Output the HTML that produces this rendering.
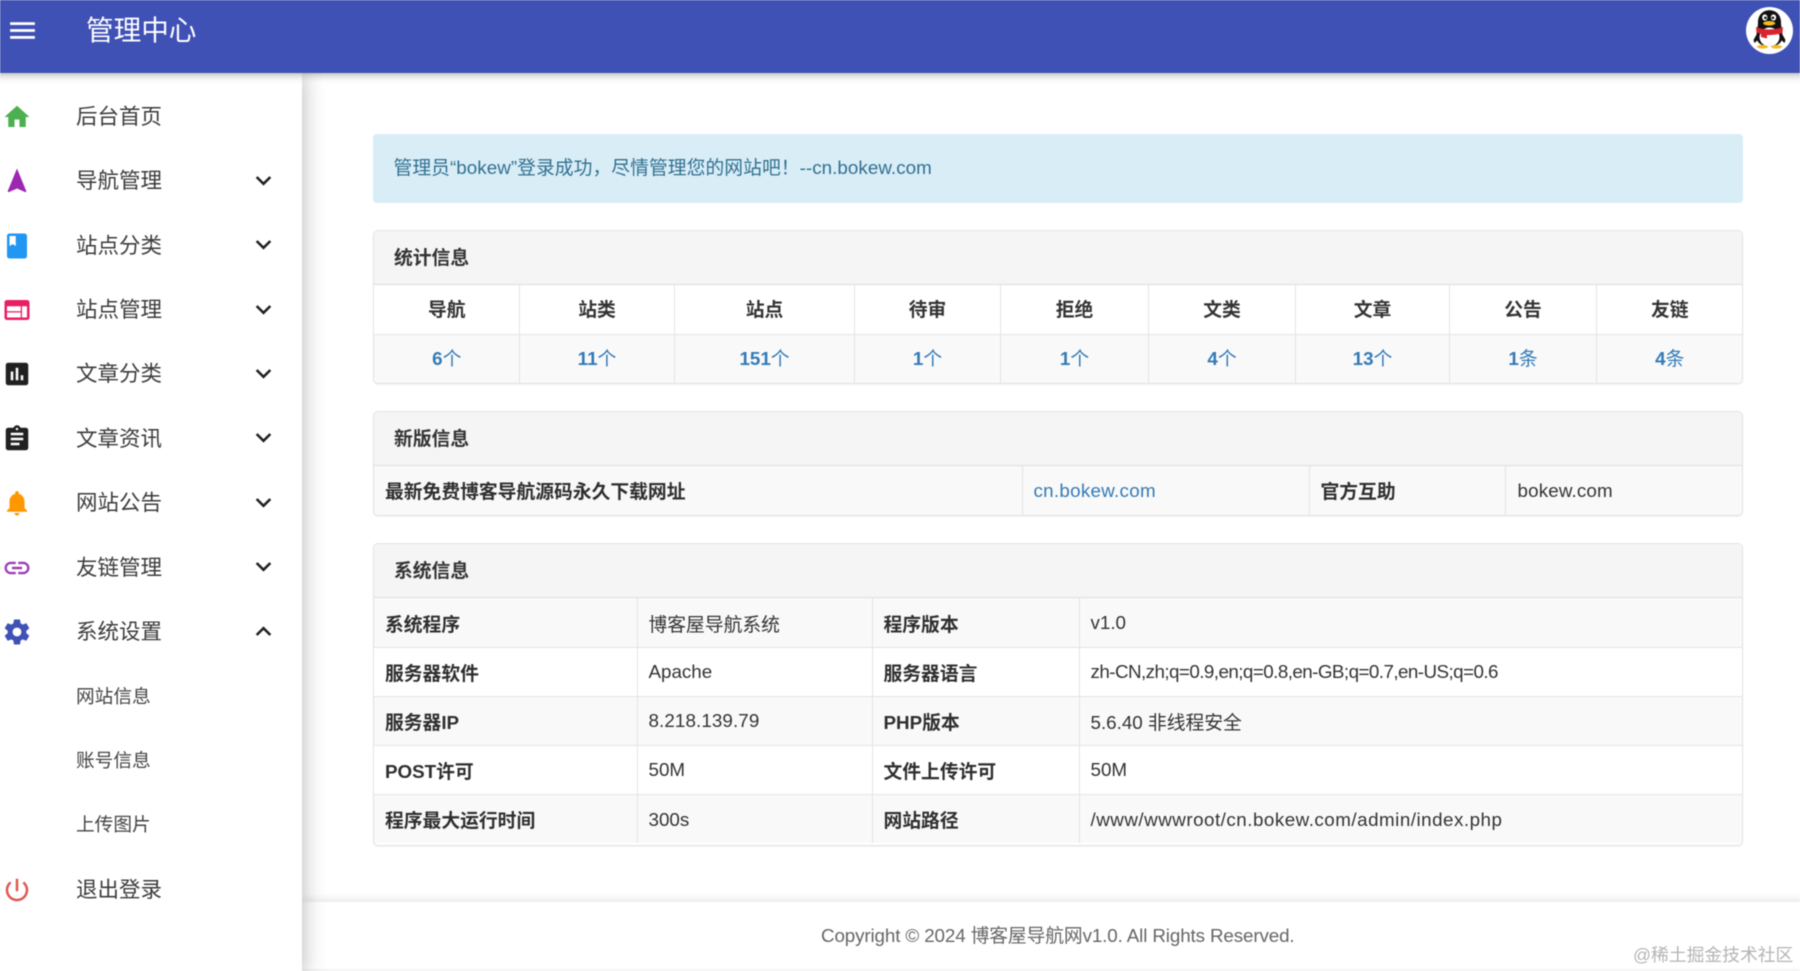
<!DOCTYPE html>
<html lang="zh-CN">
<head>
<meta charset="utf-8">
<title>管理中心</title>
<style>
*{box-sizing:border-box}
html,body{margin:0;padding:0;width:1800px;height:971px;overflow:hidden;background:#fff}
body{font-family:"Liberation Sans","Noto Sans CJK SC",sans-serif;font-size:18.8px;color:#333}
#root{position:relative;width:1800px;height:971px;overflow:hidden;filter:blur(.4px)}
.hdr{position:absolute;left:-6px;top:-6px;width:1812px;height:79px;background:#3f51b5;box-shadow:0 2px 8px rgba(0,0,0,.3);z-index:3}
.hdr svg.m{position:absolute;left:12px;top:20px;width:33px;height:33px;fill:#fff}
.hdr .t{position:absolute;left:92px;top:17px;line-height:40px;font-size:27.6px;color:#fff}
.av{position:absolute;left:1752px;top:13px;width:47px;height:47px}
.side{position:absolute;left:-6px;top:73px;width:308px;height:904px;background:#fff;box-shadow:0 0 22px rgba(0,0,0,.3);z-index:2}
.it{position:absolute;left:6px;width:302px;height:64px;line-height:64px;font-size:21.5px;color:#3c3c3c}
.it span{position:absolute;left:76px;top:0}
.it.sub span{font-size:18.7px;color:#444}
.it svg.i{position:absolute;left:2px;top:17px;width:30px;height:30px}
.it svg.c{position:absolute;left:248px;top:15.5px;width:31px;height:31px;fill:#212121}
.alert{position:absolute;left:373px;top:134px;width:1370px;height:69px;background:#d9edf7;border-radius:4px;color:#31708f;line-height:68px;padding-left:20.5px;font-size:18.8px;letter-spacing:.05px}
.p{position:absolute;left:373px;width:1370px;border:1px solid #e3e3e3;border-radius:5px;overflow:hidden;background:#fff;box-shadow:0 1px 1px rgba(0,0,0,.05)}
.p h3{margin:0;height:54px;line-height:54px;padding-left:20px;font-size:18.8px;font-weight:700;color:#333;background:#f5f5f5;border-bottom:1px solid #ddd}
table{border-collapse:collapse;table-layout:fixed;width:1368px}
td,th{height:49px;padding:0 11px;font-size:18.8px;border:1px solid #e4e4e4;text-align:left;font-weight:400;color:#333;white-space:nowrap}
tr:first-child td,tr:first-child th{border-top:0}
tr:last-child td,tr:last-child th{border-bottom:0}
td:first-child,th:first-child{border-left:0}
td:last-child,th:last-child{border-right:0}
.s th,.s td{text-align:center;padding:0 0 0 1px}
.s td,.s th{padding-bottom:2px}
.t3 td{padding-top:1.5px}
th{font-weight:700}
td.b{font-weight:700;color:#2e2e2e}
a{color:#337ab7;text-decoration:none}
.g{background:#f9f9f9}
.foot{position:absolute;left:302px;top:902px;width:1504px;height:67px;background:#fff;box-shadow:0 -3px 8px rgba(0,0,0,.09);line-height:68px;color:#666;font-size:18.8px}
.foot span{position:absolute;left:519px;top:0;white-space:nowrap;letter-spacing:-.12px}
.wm{position:absolute;left:1633px;top:943px;line-height:24px;font-size:17.8px;color:#b4b4b4;white-space:nowrap;z-index:4}
.btm{position:absolute;left:302px;top:969px;width:1504px;height:8px;background:#f3f3f3}
</style>
</head>
<body>
<div id="root">
<div class="hdr">
  <svg class="m" viewBox="0 0 24 24"><path d="M3 18h18v-2H3v2zm0-5h18v-2H3v2zm0-7v2h18V6H3z"/></svg>
  <div class="t">管理中心</div>
  <svg class="av" viewBox="0 0 47 47">
    <circle cx="23.5" cy="23.5" r="23.5" fill="#fff"/>
    <path d="M12 25 L7.5 33 L8.5 36 L14 31z M35 25 L39.5 33 L38.5 36 L33 31z" fill="#111"/>
    <path d="M23.5 3.3c-7 0-11.5 5-11.5 12 0 5-1.5 8-1.5 14 0 6 4 10 13 10s13-4 13-10c0-6-1.500-9-1.500-14 0-7-4.500-12-11.500-12z" fill="#111"/>
    <ellipse cx="23.500" cy="30" rx="10" ry="9.500" fill="#fff"/>
    <path d="M10 20 Q23.500 25 37 20 L36.500 26 Q29 28.500 21 28 L21 31.500 L15 30 L15 27 L10.500 25.500z" fill="#d9232e"/>
    <ellipse cx="18.800" cy="10.500" rx="2.600" ry="3.100" fill="#fff"/>
    <ellipse cx="27.500" cy="10.500" rx="2.600" ry="3.100" fill="#fff"/>
    <circle cx="19.400" cy="10.800" r="1.300" fill="#111"/>
    <circle cx="26.900" cy="10.800" r="1.300" fill="#111"/>
    <ellipse cx="23.200" cy="16.300" rx="6" ry="2.300" fill="#f5b81f"/>
    <ellipse cx="16.500" cy="39.800" rx="5.500" ry="1.800" fill="#f5b81f"/>
    <ellipse cx="30.500" cy="39.800" rx="5.500" ry="1.800" fill="#f5b81f"/>
  </svg>
</div>

<div class="side">
  <div class="it" style="top:12px"><svg class="i" viewBox="0 0 24 24" fill="#4caf50"><path d="M10 20v-6h4v6h5v-8h3L12 3 2 12h3v8z"/></svg><span>后台首页</span></div>
  <div class="it" style="top:76px"><svg class="i" viewBox="0 0 24 24" fill="#9c27b0"><path d="M12 2L4.5 20.29l.71.71L12 18l6.79 3 .71-.71z"/></svg><span>导航管理</span><svg class="c" viewBox="0 0 24 24"><path d="M16.59 8.59L12 13.17 7.41 8.59 6 10l6 6 6-6z"/></svg></div>
  <div class="it" style="top:140.500px"><svg class="i" viewBox="0 0 24 24" fill="#2196f3"><path d="M18 2H6c-1.100 0-2 .9-2 2v16c0 1.100.9 2 2 2h12c1.100 0 2-.9 2-2V4c0-1.100-.9-2-2-2zM6 4h5v8l-2.500-1.500L6 12V4z"/></svg><span>站点分类</span><svg class="c" viewBox="0 0 24 24"><path d="M16.590 8.590L12 13.170 7.410 8.590 6 10l6 6 6-6z"/></svg></div>
  <div class="it" style="top:205px"><svg class="i" viewBox="0 0 24 24" fill="#e91e63"><path d="M20 4H4c-1.100 0-1.990.9-1.990 2L2 18c0 1.100.9 2 2 2h16c1.100 0 2-.9 2-2V6c0-1.100-.9-2-2-2zm-5 14H4v-4h11v4zm0-5H4V9h11v4zm5 5h-4V9h4v9z"/></svg><span>站点管理</span><svg class="c" viewBox="0 0 24 24"><path d="M16.590 8.590L12 13.170 7.410 8.590 6 10l6 6 6-6z"/></svg></div>
  <div class="it" style="top:269px"><svg class="i" viewBox="0 0 24 24" fill="#212121"><path d="M19 3H5c-1.100 0-2 .9-2 2v14c0 1.100.9 2 2 2h14c1.100 0 2-.9 2-2V5c0-1.100-.9-2-2-2zM9 17H7v-7h2v7zm4 0h-2V7h2v10zm4 0h-2v-4h2v4z"/></svg><span>文章分类</span><svg class="c" viewBox="0 0 24 24"><path d="M16.590 8.590L12 13.170 7.410 8.590 6 10l6 6 6-6z"/></svg></div>
  <div class="it" style="top:333.500px"><svg class="i" viewBox="0 0 24 24" fill="#212121"><path d="M19 3h-4.180C14.400 1.840 13.300 1 12 1c-1.300 0-2.400.84-2.820 2H5c-1.100 0-2 .9-2 2v14c0 1.100.9 2 2 2h14c1.100 0 2-.9 2-2V5c0-1.100-.9-2-2-2zm-7 0c.55 0 1 .45 1 1s-.45 1-1 1-1-.45-1-1 .45-1 1-1zm2 14H7v-2h7v2zm3-4H7v-2h10v2zm0-4H7V7h10v2z"/></svg><span>文章资讯</span><svg class="c" viewBox="0 0 24 24"><path d="M16.590 8.590L12 13.170 7.410 8.590 6 10l6 6 6-6z"/></svg></div>
  <div class="it" style="top:398px"><svg class="i" viewBox="0 0 24 24" fill="#ff9800"><path d="M12 22c1.100 0 2-.9 2-2h-4c0 1.100.89 2 2 2zm6-6v-5c0-3.070-1.640-5.640-4.500-6.320V4c0-.83-.67-1.500-1.500-1.500s-1.500.67-1.500 1.500v.68C7.630 5.360 6 7.920 6 11v5l-2 2v1h16v-1l-2-2z"/></svg><span>网站公告</span><svg class="c" viewBox="0 0 24 24"><path d="M16.590 8.590L12 13.170 7.410 8.590 6 10l6 6 6-6z"/></svg></div>
  <div class="it" style="top:462.500px"><svg class="i" viewBox="0 0 24 24" fill="#9c3fb5"><path d="M3.900 12c0-1.710 1.390-3.100 3.100-3.100h4V7H7c-2.760 0-5 2.240-5 5s2.240 5 5 5h4v-1.900H7c-1.710 0-3.100-1.390-3.100-3.100zM8 13h8v-2H8v2zm9-6h-4v1.900h4c1.710 0 3.100 1.390 3.100 3.100s-1.390 3.100-3.100 3.100h-4V17h4c2.760 0 5-2.240 5-5s-2.240-5-5-5z"/></svg><span>友链管理</span><svg class="c" viewBox="0 0 24 24"><path d="M16.590 8.590L12 13.170 7.410 8.590 6 10l6 6 6-6z"/></svg></div>
  <div class="it" style="top:527px"><svg class="i" viewBox="0 0 24 24" fill="#3f51b5"><path d="M19.430 12.980c.04-.32.07-.64.07-.98s-.03-.66-.07-.98l2.110-1.650c.19-.15.24-.42.12-.64l-2-3.460c-.12-.22-.39-.3-.61-.22l-2.490 1c-.52-.4-1.080-.73-1.690-.98l-.38-2.650C14.460 2.180 14.250 2 14 2h-4c-.25 0-.46.18-.49.42l-.38 2.650c-.61.25-1.170.59-1.690.98l-2.490-1c-.23-.09-.49 0-.61.22l-2 3.460c-.13.22-.07.49.12.64l2.110 1.650c-.04.32-.07.65-.07.98s.03.66.07.98l-2.110 1.650c-.19.15-.24.42-.12.64l2 3.460c.12.22.39.3.61.22l2.490-1c.52.4 1.080.73 1.690.98l.38 2.650c.03.24.24.42.49.42h4c.25 0 .46-.18.49-.42l.38-2.650c.61-.25 1.170-.59 1.690-.98l2.490 1c.23.09.49 0 .61-.22l2-3.460c.12-.22.07-.49-.12-.64l-2.110-1.650zM12 15.500c-1.930 0-3.500-1.570-3.500-3.500s1.570-3.500 3.500-3.500 3.500 1.570 3.500 3.500-1.570 3.500-3.500 3.500z"/></svg><span>系统设置</span><svg class="c" viewBox="0 0 24 24"><path d="M12 8l-6 6 1.410 1.410L12 10.830l4.590 4.580L18 14z"/></svg></div>
  <div class="it sub" style="top:591.500px"><span>网站信息</span></div>
  <div class="it sub" style="top:655.500px"><span>账号信息</span></div>
  <div class="it sub" style="top:720px"><span>上传图片</span></div>
  <div class="it" style="top:784.500px"><svg class="i" viewBox="0 0 24 24" fill="#e0584f"><path d="M13 3h-2v10h2V3zm4.830 2.170l-1.420 1.420C17.990 7.860 19 9.810 19 12c0 3.870-3.130 7-7 7s-7-3.130-7-7c0-2.190 1.010-4.140 2.580-5.420L6.170 5.170C4.230 6.820 3 9.260 3 12c0 4.970 4.030 9 9 9s9-4.030 9-9c0-2.740-1.230-5.180-3.170-6.830z"/></svg><span>退出登录</span></div>
</div>

<div class="alert">管理员“bokew”登录成功，尽情管理您的网站吧！--cn.bokew.com</div>

<div class="p" style="top:230px;height:154px">
  <h3>统计信息</h3>
  <table class="s">
    <colgroup><col style="width:145px"><col style="width:155px"><col style="width:180px"><col style="width:146px"><col style="width:148px"><col style="width:147px"><col style="width:154px"><col style="width:147px"><col style="width:146px"></colgroup>
    <tr><th>导航</th><th>站类</th><th>站点</th><th>待审</th><th>拒绝</th><th>文类</th><th>文章</th><th>公告</th><th>友链</th></tr>
    <tr class="g"><td><a href="#"><b>6</b>个</a></td><td><a href="#"><b>11</b>个</a></td><td><a href="#"><b>151</b>个</a></td><td><a href="#"><b>1</b>个</a></td><td><a href="#"><b>1</b>个</a></td><td><a href="#"><b>4</b>个</a></td><td><a href="#"><b>13</b>个</a></td><td><a href="#"><b>1</b>条</a></td><td><a href="#"><b>4</b>条</a></td></tr>
  </table>
</div>

<div class="p" style="top:411px;height:105px">
  <h3>新版信息</h3>
  <table>
    <colgroup><col style="width:648px"><col style="width:287px"><col style="width:196px"><col style="width:237px"></colgroup>
    <tr class="g"><td class="b">最新免费博客导航源码永久下载网址</td><td><a href="#" style="letter-spacing:.28px">cn.bokew.com</a></td><td class="b">官方互助</td><td style="letter-spacing:.15px;padding-left:12px">bokew.com</td></tr>
  </table>
</div>

<div class="p" style="top:543px;height:303px">
  <h3>系统信息</h3>
  <table class="t3">
    <colgroup><col style="width:263px"><col style="width:235px"><col style="width:207px"><col style="width:663px"></colgroup>
    <tr class="g"><td class="b">系统程序</td><td>博客屋导航系统</td><td class="b">程序版本</td><td>v1.0</td></tr>
    <tr><td class="b">服务器软件</td><td>Apache</td><td class="b">服务器语言</td><td style="letter-spacing:-.55px">zh-CN,zh;q=0.9,en;q=0.8,en-GB;q=0.7,en-US;q=0.6</td></tr>
    <tr class="g"><td class="b">服务器IP</td><td style="letter-spacing:.1px">8.218.139.79</td><td class="b">PHP版本</td><td>5.6.40 非线程安全</td></tr>
    <tr><td class="b">POST许可</td><td>50M</td><td class="b">文件上传许可</td><td>50M</td></tr>
    <tr class="g"><td class="b">程序最大运行时间</td><td>300s</td><td class="b">网站路径</td><td style="letter-spacing:.5px">/www/wwwroot/cn.bokew.com/admin/index.php</td></tr>
  </table>
</div>

<div class="foot"><span>Copyright © 2024 博客屋导航网v1.0. All Rights Reserved.</span></div>
<div class="btm"></div>
<div class="wm">@稀土掘金技术社区</div>
</div>
</body>
</html>
